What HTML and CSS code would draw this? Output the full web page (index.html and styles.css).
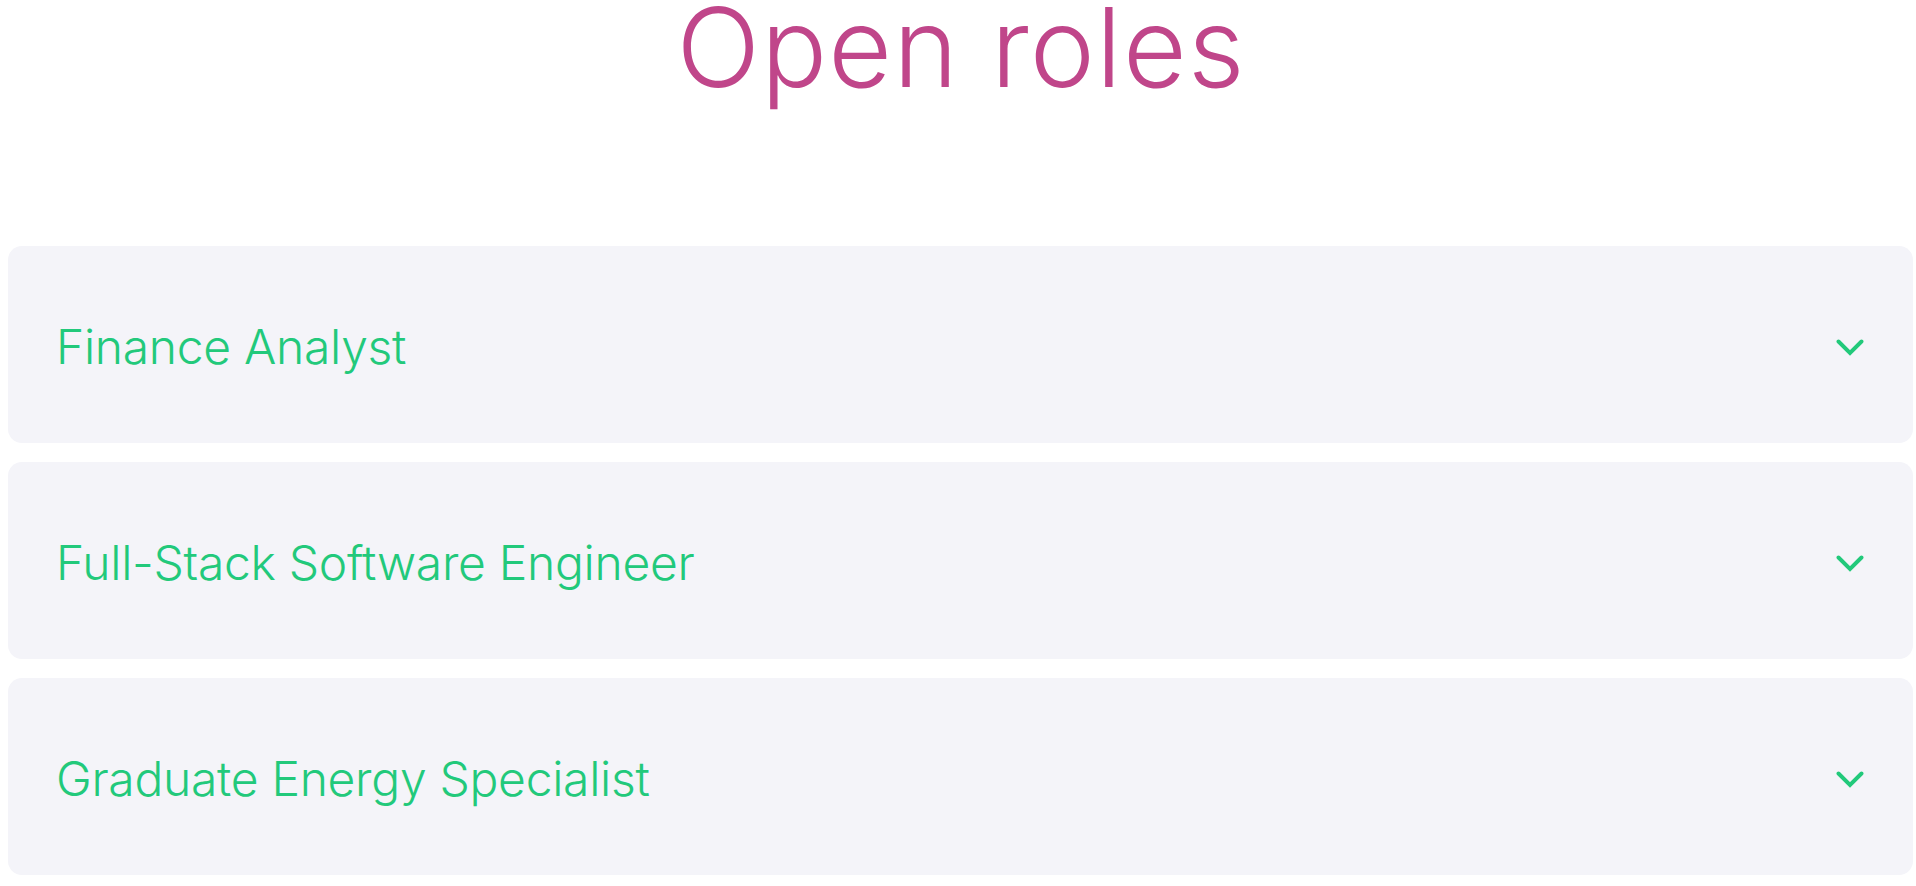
FILE: index.html
```html
<!DOCTYPE html>
<html lang="en">
<head>
<meta charset="utf-8">
<title>Open roles</title>
<link rel="stylesheet" href="styles.css">
</head>
<body>
<section class="roles">
  <h1 class="roles-title">Open roles</h1>
  <ul class="role-list">
    <li class="role">
      <span class="role-name">Finance Analyst</span>
      <svg class="chevron" width="28" height="18" viewBox="0 0 28 18" aria-hidden="true"><polyline points="2.5,2.5 14,14 25.5,2.5" fill="none" stroke="currentColor" stroke-width="3.9" stroke-linecap="round" stroke-linejoin="miter"/></svg>
    </li>
    <li class="role">
      <span class="role-name">Full-Stack Software Engineer</span>
      <svg class="chevron" width="28" height="18" viewBox="0 0 28 18" aria-hidden="true"><polyline points="2.5,2.5 14,14 25.5,2.5" fill="none" stroke="currentColor" stroke-width="3.9" stroke-linecap="round" stroke-linejoin="miter"/></svg>
    </li>
    <li class="role">
      <span class="role-name">Graduate Energy Specialist</span>
      <svg class="chevron" width="28" height="18" viewBox="0 0 28 18" aria-hidden="true"><polyline points="2.5,2.5 14,14 25.5,2.5" fill="none" stroke="currentColor" stroke-width="3.9" stroke-linecap="round" stroke-linejoin="miter"/></svg>
    </li>
  </ul>
</section>
</body>
</html>
```
FILE: styles.css
```css
html, body {
  margin: 0;
  padding: 0;
  background: #ffffff;
}

body {
  font-family: Inter, "Liberation Sans", sans-serif;
}

.roles {
  display: flex;
  flex-direction: column;
}

.roles-title {
  margin: -8px 0 8px 0;
  padding-left: 6px;
  height: 246px;
  box-sizing: border-box;
  text-align: center;
  font-size: 110px;
  font-weight: 300;
  line-height: 1;
  color: #c0468a;
  letter-spacing: 1.1px;
}

.role-list {
  list-style: none;
  margin: 0;
  padding: 0 3px 0 8px;
  display: flex;
  flex-direction: column;
  gap: 19px;
}

.role {
  height: 197px;
  box-sizing: border-box;
  display: flex;
  align-items: center;
  justify-content: space-between;
  padding: 0 49px 0 48px;
  background: #f4f4f9;
  border-radius: 14px;
  color: #22c97b;
}

.role-name {
  font-size: 48px;
  font-weight: 300;
  line-height: 1;
  letter-spacing: -0.3px;
  margin-top: 4px;
}

.chevron {
  display: block;
  margin-top: 6px;
}
```
